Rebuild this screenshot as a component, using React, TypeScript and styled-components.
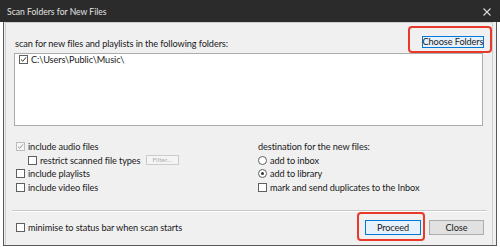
import React from "react";
import styled, { createGlobalStyle } from "styled-components";

const Global = createGlobalStyle`
  html, body { margin: 0; padding: 0; background: #ffffff; }
  body { font-family: Lato, "Noto Sans", sans-serif; }
  #root { width: 500px; height: 247px; }
`;

const Window = styled.div`
  width: 500px;
  height: 247px;
  display: flex;
  flex-direction: column;
  background: #ffffff;
  overflow: hidden;
`;

const TitleBar = styled.div`
  height: 22px;
  flex: none;
  background: #2b2b2b;
  display: flex;
  align-items: center;
  justify-content: space-between;
  padding: 1px 9px 0 7px;
  box-sizing: border-box;
  color: #e2e2e2;
  font-size: 8.6px;
`;

const CloseX = styled.svg`
  width: 8px;
  height: 8px;
`;

const Frame = styled.div`
  flex: 1;
  margin: 0 3px 1px 3px;
  border: 1px solid #5a5a5a;
  border-top: 0;
  background: #f0f0f0;
  display: flex;
`;

const Panel = styled.div`
  flex: 1;
  margin: 0 3px 0 1px;
  border: 1px solid #cfcfcf;
  border-bottom: 0;
  display: flex;
  flex-direction: column;
  font-size: 9.2px;
  letter-spacing: -0.1px;
  color: #1a1a1a;
`;

const TopRow = styled.div`
  display: flex;
  align-items: center;
  justify-content: space-between;
  padding: 13px 8px 0 9px;
  height: 12px;
  margin-bottom: 5px;
`;

const Label = styled.span`
  padding-top: 3px;
  white-space: nowrap;
`;

const Highlight = styled.div`
  position: relative;
  display: inline-flex;
`;

const Ring = styled.span<{ $t: number; $r: number; $b: number; $l: number }>`
  position: absolute;
  top: ${(p) => -p.$t}px;
  right: ${(p) => -p.$r}px;
  bottom: ${(p) => -p.$b}px;
  left: ${(p) => -p.$l}px;
  border: 2.5px solid #e8392b;
  border-radius: 4px;
  pointer-events: none;
`;

const Button = styled.button<{ $primary?: boolean; $w: number; $h: number }>`
  width: ${(p) => p.$w}px;
  height: ${(p) => p.$h}px;
  padding: 0;
  margin: 0;
  font-family: inherit;
  font-size: 9.2px;
  letter-spacing: -0.1px;
  color: #1a1a1a;
  background: ${(p) => (p.$primary ? "#e5f1fb" : "#e1e1e1")};
  border: 1px solid ${(p) => (p.$primary ? "#0078d7" : "#adadad")};
  display: flex;
  align-items: center;
  justify-content: center;
  line-height: 1;
  white-space: nowrap;
`;

const SmallButton = styled.button`
  width: 33px;
  height: 10px;
  padding: 0;
  margin: 0 0 0 5px;
  font-family: inherit;
  font-size: 6.5px;
  color: #b0b0b0;
  background: #f4f4f4;
  border: 1px solid #cccccc;
  display: flex;
  align-items: center;
  justify-content: center;
  line-height: 1;
`;

const ListBox = styled.div`
  height: 70px;
  margin: 0 9px 0 8px;
  background: #ffffff;
  border: 1px solid #acacac;
  padding: 1px 0 0 4px;
`;

const Row = styled.label<{ $indent?: number }>`
  display: flex;
  align-items: center;
  height: 13.5px;
  padding-left: ${(p) => p.$indent ?? 0}px;
  white-space: nowrap;
`;

const ListRow = styled(Row)`
  height: 9px;
`;

const Box = styled.span<{ $disabled?: boolean }>`
  width: 9px;
  height: 9px;
  box-sizing: border-box;
  border: 1px solid ${(p) => (p.$disabled ? "#bdbdbd" : "#5f5f5f")};
  background: ${(p) => (p.$disabled ? "#f4f4f4" : "#ffffff")};
  margin-right: 3px;
  flex: none;
  display: flex;
  align-items: center;
  justify-content: center;
`;

const Radio = styled.span<{ $on?: boolean }>`
  width: 9px;
  height: 9px;
  box-sizing: border-box;
  border-radius: 50%;
  border: 1px solid #5f5f5f;
  background: #ffffff;
  margin-right: 3px;
  flex: none;
  display: flex;
  align-items: center;
  justify-content: center;
  &::after {
    content: "";
    width: 3px;
    height: 3px;
    border-radius: 50%;
    background: ${(p) => (p.$on ? "#333333" : "transparent")};
  }
`;

const Options = styled.div`
  display: grid;
  grid-template-columns: 242px 1fr;
  padding: 14px 0 0 10px;
  height: 55px;
`;

const Column = styled.div`
  display: flex;
  flex-direction: column;
`;

const Separator = styled.div`
  height: 1px;
  margin: 15px 5px 0 6px;
  background: #c8c8c8;
  border-bottom: 1px solid #ffffff;
`;

const Footer = styled.div`
  display: flex;
  align-items: center;
  padding: 8px 8px 0 10px;
  height: 15px;
`;

const FooterLeft = styled.div`
  flex: 1;
`;

const Gap = styled.span`
  width: 8px;
`;

const Check = ({ color }: { color: string }) => (
  <svg width="7" height="7" viewBox="0 0 7 7">
    <path d="M1 3.6 L2.8 5.3 L6 1.4" fill="none" stroke={color} strokeWidth="1" />
  </svg>
);

export default function App() {
  return (
    <>
      <Global />
      <Window>
        <TitleBar>
          <span>Scan Folders for New Files</span>
          <CloseX viewBox="0 0 8 8">
            <path d="M0.5 0.5 L7.5 7.5 M7.5 0.5 L0.5 7.5" stroke="#d8d8d8" strokeWidth="1.1" />
          </CloseX>
        </TitleBar>
        <Frame>
          <Panel>
            <TopRow>
              <Label>scan for new files and playlists in the following folders:</Label>
              <Highlight>
                <Button $primary $w={62} $h={12}>Choose Folders</Button>
                <Ring $t={10} $r={8} $b={5} $l={14} />
              </Highlight>
            </TopRow>
            <ListBox>
              <ListRow>
                <Box><Check color="#333" /></Box>
                C:\Users\Public\Music\
              </ListRow>
            </ListBox>
            <Options>
              <Column>
                <Row>
                  <Box $disabled><Check color="#9a9a9a" /></Box>
                  include audio files
                </Row>
                <Row $indent={12}>
                  <Box />
                  restrict scanned file types
                  <SmallButton>Filter...</SmallButton>
                </Row>
                <Row>
                  <Box />
                  include playlists
                </Row>
                <Row>
                  <Box />
                  include video files
                </Row>
              </Column>
              <Column>
                <Row>destination for the new files:</Row>
                <Row>
                  <Radio />
                  add to inbox
                </Row>
                <Row>
                  <Radio $on />
                  add to library
                </Row>
                <Row>
                  <Box />
                  mark and send duplicates to the Inbox
                </Row>
              </Column>
            </Options>
            <Separator />
            <Footer>
              <FooterLeft>
                <Row>
                  <Box />
                  minimise to status bar when scan starts
                </Row>
              </FooterLeft>
              <Highlight>
                <Button $primary $w={56} $h={15}>Proceed</Button>
                <Ring $t={8} $r={4} $b={6} $l={8} />
              </Highlight>
              <Gap />
              <Button $w={55} $h={15}>Close</Button>
            </Footer>
          </Panel>
        </Frame>
      </Window>
    </>
  );
}
